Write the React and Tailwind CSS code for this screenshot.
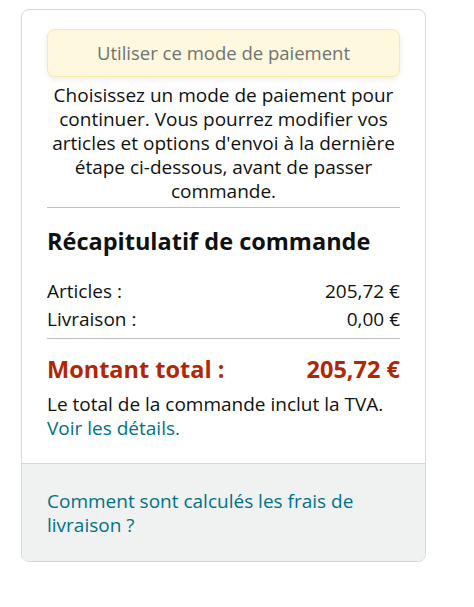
import React from "react";

const font = { fontFamily: '"Open Sans", Arial, sans-serif' };

function SummaryRow({ label, value }) {
  return (
    <div className="flex justify-between text-[19px] leading-[28px] text-[#0f1111]">
      <span>{label}</span>
      <span>{value}</span>
    </div>
  );
}

export default function App() {
  return (
    <div className="min-h-[607px] bg-white pt-[9px] pl-[21px]" style={font}>
      <div className="w-[405px] rounded-lg border border-[#d5d9d9] overflow-hidden">
        <div className="px-[25px] pt-[19px] pb-[23px]">
          <button
            disabled
            className="w-full h-[48px] rounded-lg border border-[#fbe8a6] bg-[#fef8de] text-[18.5px] text-[#6f7373] shadow-[0_2px_5px_rgba(213,217,217,0.5)]"
          >
            Utiliser ce mode de paiement
          </button>
          <p className="mt-[6px] text-center text-[19px] leading-[24px] text-[#0f1111]">
            Choisissez un mode de paiement pour continuer. Vous pourrez
            modifier vos articles et options d'envoi à la dernière étape
            ci-dessous, avant de passer commande.
          </p>
          <div className="mt-[4px] border-t border-[#bbbfbf]" />

          <h2 className="mt-[19px] text-[23.5px] leading-[28px] font-bold text-[#0f1111]">
            Récapitulatif de commande
          </h2>

          <div className="mt-[22px]">
            <SummaryRow label="Articles :" value="205,72 €" />
            <SummaryRow label="Livraison :" value="0,00 €" />
          </div>
          <div className="mt-[5px] border-t border-[#bbbfbf]" />

          <div className="mt-[15px] flex justify-between text-[23.5px] leading-[30px] font-bold text-[#b12704]">
            <span>Montant total :</span>
            <span>205,72 €</span>
          </div>

          <p className="mt-[8px] text-[19px] leading-[24px] text-[#0f1111]">
            Le total de la commande inclut la TVA.
          </p>
          <a href="#" className="block text-[19px] leading-[24px] text-[#007185]">
            Voir les détails.
          </a>
        </div>

        <div className="border-t border-[#d5d9d9] bg-[#f0f2f2] px-[25px] pt-[25px] pb-[24px]">
          <a href="#" className="block text-[19px] leading-[24px] text-[#007185]">
            Comment sont calculés les frais de livraison ?
          </a>
        </div>
      </div>
    </div>
  );
}
